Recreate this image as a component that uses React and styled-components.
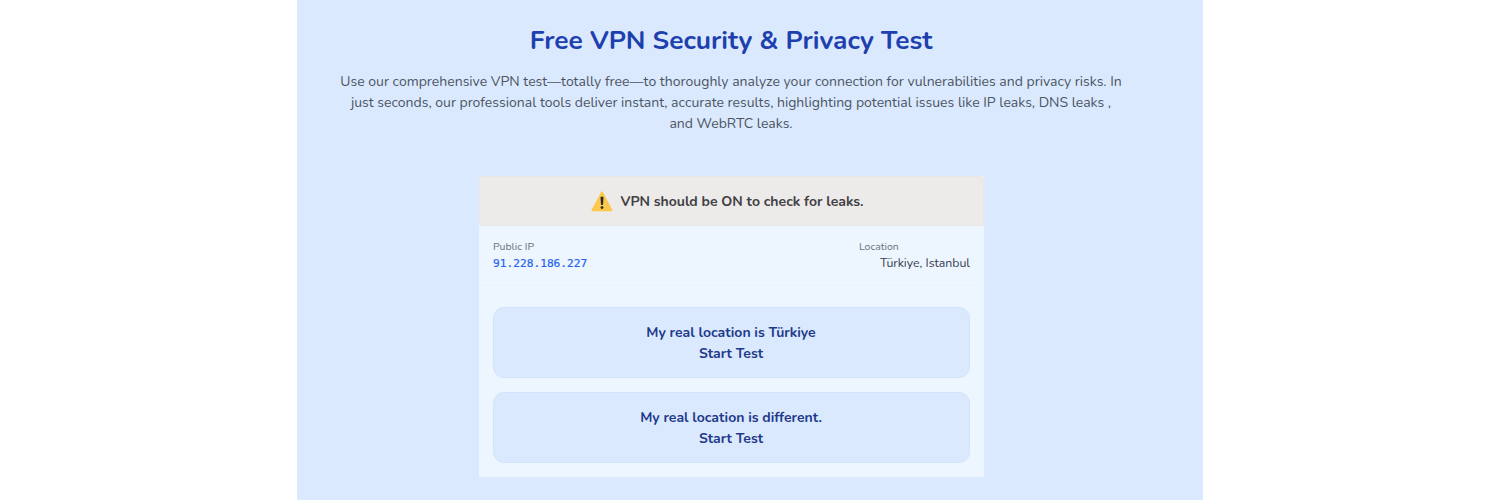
import React from "react";
import styled, { createGlobalStyle } from "styled-components";

const GlobalStyle = createGlobalStyle`
  * {
    box-sizing: border-box;
  }

  body {
    margin: 0;
    background: #ffffff;
    font-family: Nunito, Lato, "Noto Sans", sans-serif;
  }
`;

const Section = styled.section`
  display: flex;
  flex-direction: column;
  align-items: center;
  width: 906px;
  height: 500px;
  margin-left: 297px;
  padding: 22px 37px 0 0;
  background-color: #dbe9fe;
  overflow: hidden;
`;

const Title = styled.h1`
  margin: 0;
  padding-right: 1px;
  color: #1e40af;
  font-size: 26.3px;
  font-weight: 700;
  line-height: 36px;
`;

const Intro = styled.p`
  margin: 13px 0 0;
  padding-right: 1px;
  color: #4b5563;
  font-size: 14.02px;
  line-height: 21px;
  text-align: center;
`;

const Line = styled.span`
  display: block;
  white-space: nowrap;
`;

const Card = styled.div`
  width: 505px;
  margin-top: 42px;
  background-color: #edf5ff;
`;

const Banner = styled.div`
  display: flex;
  align-items: center;
  justify-content: center;
  gap: 7px;
  height: 50px;
  padding-right: 8px;
  border: 1px solid #e8e7e8;
  border-radius: 2px;
  background-color: #edebe9;
  color: #414044;
  font-size: 14px;
  font-weight: 700;
  line-height: 21px;
`;

const Details = styled.div`
  display: flex;
  justify-content: space-between;
  height: 60px;
  padding: 14px 14px 0;
  border-bottom: 1px solid #e9f2fd;
  border-radius: 3px;
`;

const Label = styled.div`
  color: #6b7280;
  font-size: 10.5px;
  line-height: 14px;
`;

const Address = styled.div`
  padding-top: 1px;
  color: #2563eb;
  font-family: "DejaVu Sans Mono", monospace;
  font-size: 11.2px;
  line-height: 18px;
  -webkit-text-stroke: 0.2px;
`;

const Place = styled.div`
  padding-left: 21px;
  color: #374151;
  font-size: 12.3px;
  line-height: 18px;
`;

const Actions = styled.div`
  display: flex;
  flex-direction: column;
  gap: 14px;
  padding: 21px 14px 14px;
`;

const TestButton = styled.button`
  height: 71px;
  padding: 0 1px 0 0;
  border: 1px solid #d3e3fc;
  border-radius: 11px;
  background-color: #dbe9fe;
  color: #1e3a8a;
  font-family: inherit;
  font-size: 14px;
  font-weight: 700;
  line-height: 21px;
  cursor: pointer;
`;

function WarningIcon() {
  return (
    <svg width="22" height="21" viewBox="0 0 22 21" aria-hidden="true">
      <path d="M11 1.2 L20.8 19.4 H1.2 Z" fill="#fdc84b" stroke="#fdc84b" strokeWidth="1.6" strokeLinejoin="round" />
      <path d="M9.5 6.2 Q11 4.7 12.5 6.2 L12 13.4 Q11 14.7 10 13.4 Z" fill="#2b2a28" />
      <circle cx="11" cy="16.6" r="1.4" fill="#2b2a28" />
    </svg>
  );
}

function App() {
  return (
    <>
      <GlobalStyle />
      <Section>
        <Title>Free VPN Security &amp; Privacy Test</Title>
        <Intro>
          <Line>
            Use our comprehensive VPN test—totally free—to thoroughly analyze your connection for vulnerabilities and privacy risks. In
          </Line>
          <Line>
            just seconds, our professional tools deliver instant, accurate results, highlighting potential issues like IP leaks, DNS leaks ,
          </Line>
          <Line>and WebRTC leaks.</Line>
        </Intro>
        <Card>
          <Banner>
            <WarningIcon />
            <Line>VPN should be ON to check for leaks.</Line>
          </Banner>
          <Details>
            <div>
              <Label>Public IP</Label>
              <Address>91.228.186.227</Address>
            </div>
            <div>
              <Label>Location</Label>
              <Place>Türkiye, Istanbul</Place>
            </div>
          </Details>
          <Actions>
            <TestButton>
              <Line>My real location is Türkiye</Line>
              <Line>Start Test</Line>
            </TestButton>
            <TestButton>
              <Line>My real location is different.</Line>
              <Line>Start Test</Line>
            </TestButton>
          </Actions>
        </Card>
      </Section>
    </>
  );
}

export default App;
